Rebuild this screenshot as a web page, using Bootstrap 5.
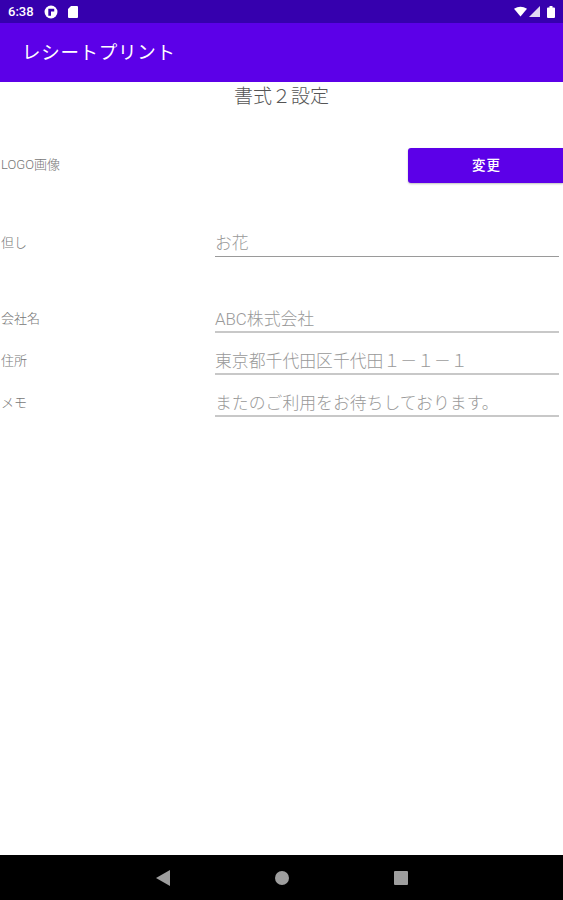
<!DOCTYPE html>
<html lang="ja">
<head>
  <meta charset="UTF-8">
  <meta name="viewport" content="width=device-width, initial-scale=1.0">
  <title>レシートプリント</title>
  <link href="https://cdn.jsdelivr.net/npm/bootstrap@5.3.0/dist/css/bootstrap.min.css" rel="stylesheet">
  <style>
    html, body { height: 100%; overflow: hidden; }
    body {
      font-family: "Roboto", "Noto Sans CJK JP", sans-serif;
      font-weight: 300;
      background: #fff;
      color: #757575;
    }
    .screen { height: 900px; }

    .status-bar {
      height: 23px;
      background: #3600ae;
      color: #fff;
      padding: 0 8px;
      font-size: 13px;
      font-weight: 500;
    }
    .status-left { gap: 10px; }
    .status-right { gap: 2px; }
    .battery-icon { margin-left: 5px; }
    .app-bar {
      height: 59px;
      padding: 3px 0 0 22px;
      background: #5c00e8;
      color: #fff;
      font-size: 18.5px;
      font-weight: 400;
      letter-spacing: .7px;
    }
    .page-title {
      height: 29px;
      font-size: 19px;
      line-height: 29px;
      color: #555;
    }

    .form-line { padding-right: 4px; }
    .field-label {
      width: 215px;
      flex-shrink: 0;
      padding: 4px 0 0 1px;
      font-size: 13px;
      color: #777;
    }
    .field-value {
      flex-grow: 1;
      height: 32px;
      padding-top: 3px;
      font-size: 16.85px;
      line-height: 30px;
      color: #999;
      border-bottom: 2px solid #c8c8c8;
      white-space: nowrap;
    }
    .field-value-dark { border-bottom: 1px solid #9a9a9a; }

    .logo-row { height: 36px; margin-top: 36px; }
    .logo-row .logo-label { width: 408px; padding-top: 0; }
    .change-btn {
      width: 155px;
      height: 35px;
      padding: 0 0 0 2px;
      background: #5c00e8;
      color: #fff;
      border: 0;
      border-radius: 3px 0 0 3px;
      font-size: 13.5px;
      font-weight: 500;
      letter-spacing: 1px;
      box-shadow: 0 1px 2px rgba(0, 0, 0, .25);
    }
    .tadashi-row { margin-top: 42px; }
    .company-row { margin-top: 44px; }
    .next-row { margin-top: 10px; }

    .nav-bar {
      height: 45px;
      background: #000;
      gap: 105px;
    }
  </style>
</head>
<body>
  <div class="screen d-flex flex-column">
    <div class="status-bar d-flex align-items-center justify-content-between">
      <div class="status-left d-flex align-items-center">
        <span>6:38</span>
        <svg width="14" height="14" viewBox="0 0 13 13">
          <circle cx="6.5" cy="6.5" r="6" fill="#fff"/>
          <path d="M4 10V3.5h5.5V6H6.500v4z" fill="#3600ae"/>
        </svg>
        <svg width="10" height="12" viewBox="0 0 10 12">
          <path d="M3 0h6a1 1 0 0 1 1 1v10a1 1 0 0 1-1 1H1a1 1 0 0 1-1-1V3z" fill="#fff"/>
        </svg>
      </div>
      <div class="status-right d-flex align-items-center">
        <svg width="13" height="11" viewBox="0 0 14 11"><path d="M0 2.500Q7-2 14 2.500L7 11z" fill="#fff"/></svg>
        <svg width="11" height="11" viewBox="0 0 11 11"><path d="M11 0v11H0z" fill="#fff" opacity=".85"/></svg>
        <svg class="battery-icon" width="8" height="12" viewBox="0 0 8 12"><path d="M2.500 0h3v1.500H7a1 1 0 0 1 1 1V11a1 1 0 0 1-1 1H1a1 1 0 0 1-1-1V2.500a1 1 0 0 1 1-1h1.500z" fill="#fff"/></svg>
      </div>
    </div>

    <div class="app-bar d-flex align-items-center">レシートプリント</div>

    <div class="page-title text-center">書式２設定</div>

    <div class="logo-row d-flex align-items-center">
      <div class="field-label logo-label">LOGO画像</div>
      <button type="button" class="btn change-btn">変更</button>
    </div>

    <div class="form-line tadashi-row d-flex align-items-center">
      <div class="field-label">但し</div>
      <div class="field-value field-value-dark">お花</div>
    </div>

    <div class="form-line company-row d-flex align-items-center">
      <div class="field-label">会社名</div>
      <div class="field-value">ABC株式会社</div>
    </div>
    <div class="form-line next-row d-flex align-items-center">
      <div class="field-label">住所</div>
      <div class="field-value">東京都千代田区千代田１－１－１</div>
    </div>
    <div class="form-line next-row d-flex align-items-center">
      <div class="field-label">メモ</div>
      <div class="field-value">またのご利用をお待ちしております。</div>
    </div>

    <div class="flex-grow-1"></div>

    <div class="nav-bar d-flex align-items-center justify-content-center">
      <svg width="14" height="16" viewBox="0 0 14 16"><path d="M14 0v16L0 8z" fill="#9e9e9e"/></svg>
      <svg width="14" height="14" viewBox="0 0 14 14"><circle cx="7" cy="7" r="7" fill="#9e9e9e"/></svg>
      <svg width="14" height="14" viewBox="0 0 14 14"><rect width="14" height="14" rx="1" fill="#9e9e9e"/></svg>
    </div>
  </div>

  <script src="https://cdn.jsdelivr.net/npm/bootstrap@5.3.0/dist/js/bootstrap.bundle.min.js"></script>
</body>
</html>
